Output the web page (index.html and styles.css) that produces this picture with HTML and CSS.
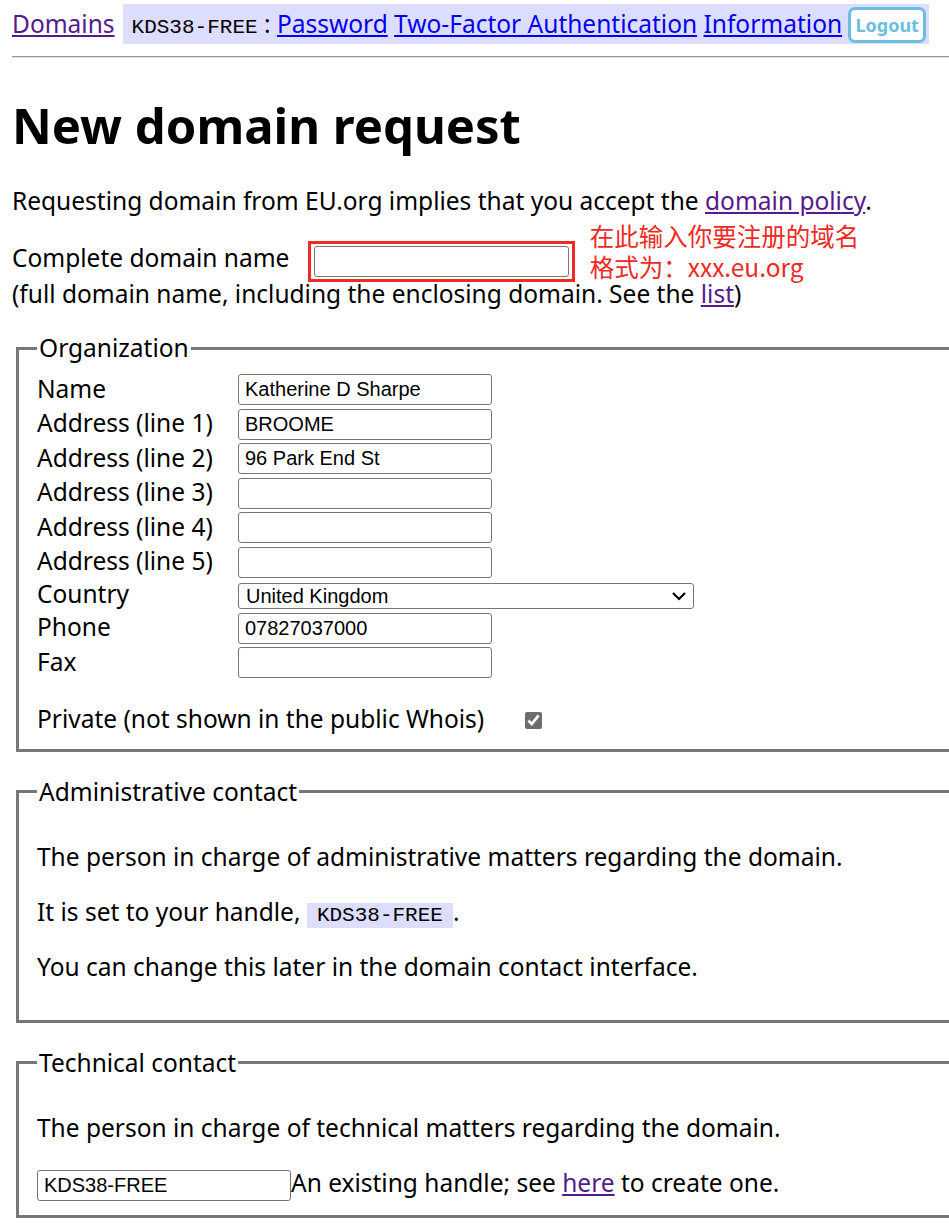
FILE: index.html
```html
<!DOCTYPE html>
<html lang="en">
<head>
  <meta charset="UTF-8">
  <meta name="viewport" content="width=device-width, initial-scale=1.0">
  <title>EU.org - New domain request</title>
  <link rel="stylesheet" href="styles.css">
</head>
<body>
  <nav class="topbar">
    <a class="seen" href="#">Domains</a>
    <div class="account">
      <span class="handle">KDS38-FREE</span> :
      <a href="#">Password</a>
      <a href="#">Two-Factor Authentication</a>
      <a href="#">Information</a>
      <button class="logout">Logout</button>
    </div>
  </nav>
  <hr>

  <h1>New domain request</h1>

  <p class="intro">Requesting domain from EU.org implies that you accept the <a class="seen" href="#">domain policy</a>.</p>

  <p class="fqdn">
    Complete domain name
    <span class="mark">
      <input type="text" name="fqdn">
      <span class="note">
        <span>在此输入你要注册的域名</span>
        <span>格式为：xxx.eu.org</span>
      </span>
    </span><br>
    (full domain name, including the enclosing domain. See the <a class="seen" href="#">list</a>)
  </p>

  <fieldset>
    <legend>Organization</legend>
    <table class="form">
      <tr><th>Name</th><td><input type="text" value="Katherine D Sharpe"></td></tr>
      <tr><th>Address (line 1)</th><td><input type="text" value="BROOME"></td></tr>
      <tr><th>Address (line 2)</th><td><input type="text" value="96 Park End St"></td></tr>
      <tr><th>Address (line 3)</th><td><input type="text"></td></tr>
      <tr><th>Address (line 4)</th><td><input type="text"></td></tr>
      <tr><th>Address (line 5)</th><td><input type="text"></td></tr>
      <tr class="short">
        <th>Country</th>
        <td>
          <select>
            <option>United Kingdom</option>
            <option>France</option>
            <option>Germany</option>
          </select>
        </td>
      </tr>
      <tr><th>Phone</th><td><input type="text" value="07827037000"></td></tr>
      <tr><th>Fax</th><td><input type="text"></td></tr>
    </table>
    <p class="private">Private (not shown in the public Whois) <input type="checkbox" checked></p>
  </fieldset>

  <fieldset>
    <legend>Administrative contact</legend>
    <p>The person in charge of administrative matters regarding the domain.</p>
    <p>It is set to your handle, <span class="tag">KDS38-FREE</span>.</p>
    <p>You can change this later in the domain contact interface.</p>
  </fieldset>

  <fieldset>
    <legend>Technical contact</legend>
    <p>The person in charge of technical matters regarding the domain.</p>
    <div class="handle-row"><input type="text" value="KDS38-FREE">An existing handle; see <a class="seen" href="#">here</a> to create one.</div>
  </fieldset>
</body>
</html>
```

FILE: styles.css
```css
html {
  overflow-x: hidden;
}

body {
  font-family: 'Noto Sans', 'Open Sans', sans-serif;
  font-size: 24.5px;
  line-height: 32px;
  margin: 4px 12px 12px;
  min-width: 1000px;
  color: #000;
  background: #fff;
}

a {
  color: #0000ee;
}

a.seen {
  color: #551a8b;
}

.topbar {
  display: flex;
  align-items: center;
}

.topbar > a {
  margin-right: 8px;
}

.account {
  background-color: #ddddff;
  height: 40px;
  line-height: 40px;
  padding: 0 3px 0 9px;
}

.handle {
  font-family: 'Liberation Mono', monospace;
  font-size: 21px;
}

.logout {
  vertical-align: middle;
  margin: -3px 0 0 0;
  height: 36px;
  padding: 0 4px;
  background: #fff;
  border: 3px solid #6cbee0;
  border-radius: 7px;
  color: #6cbee0;
  font-family: 'Noto Sans', sans-serif;
  font-weight: bold;
  font-size: 18px;
  cursor: pointer;
}

hr {
  border: 0;
  border-top: 1px solid #9a9a9a;
  border-bottom: 1px solid #e0e0e0;
  margin: 12px 0 0;
}

h1 {
  font-size: 49px;
  line-height: 64px;
  margin: 35px 0 28px;
}

p {
  margin: 23px 0;
}

.intro {
  margin: 0 0 23px;
}

.fqdn {
  margin: 0 0 20px;
  line-height: 36px;
}

.mark {
  position: relative;
  display: inline-block;
  vertical-align: middle;
  margin: -3px 0 -6px 12px;
  padding: 2px 3px;
  border: 3px solid #ee2a24;
  line-height: 0;
}

.note {
  position: absolute;
  left: 279px;
  top: -20px;
  display: flex;
  flex-direction: column;
  gap: 7px;
  font-family: 'Noto Sans CJK SC', sans-serif;
  font-size: 24.5px;
  line-height: 24px;
  color: #ee2a24;
  white-space: nowrap;
}

input[type="text"],
select {
  font-family: 'Liberation Sans', Arial, sans-serif;
  font-size: 20px;
  color: #000;
  border: 1px solid #767676;
  border-radius: 3px;
  box-sizing: border-box;
  margin: 0;
  vertical-align: middle;
}

input[type="text"] {
  width: 254px;
  height: 31px;
  padding: 1px 6px;
}

.mark input[type="text"] {
  width: 255px;
}

select {
  appearance: none;
  width: 456px;
  height: 26px;
  padding: 0 30px 0 7px;
  background: #fff url("data:image/svg+xml,%3Csvg xmlns='http://www.w3.org/2000/svg' width='16' height='10' viewBox='0 0 16 10'%3E%3Cpath d='M2 2l6 6 6-6' fill='none' stroke='%23000' stroke-width='2.2'/%3E%3C/svg%3E") no-repeat right 6px center;
}

fieldset {
  margin: 0 0 0 4px;
  padding: 7px 18px 14px;
  border: 3px solid #777;
}

fieldset + fieldset {
  margin-top: 24px;
}

legend {
  padding: 0 2px;
}

legend + p {
  margin-top: 26px;
}

.form {
  border-spacing: 0;
}

.form th {
  width: 201px;
  height: 34.5px;
  text-align: left;
  font-weight: normal;
  padding: 0;
}

.form .short th {
  height: 31.5px;
}

.form td {
  padding: 0;
  vertical-align: middle;
}

.form th,
.form td {
  line-height: 30px;
}

.private {
  margin: 24px 0 0;
}

.private input {
  width: 17px;
  height: 17px;
  margin: 0 0 0 34px;
  vertical-align: -1px;
  accent-color: #6d6d6d;
}

.tag {
  font-family: 'Liberation Mono', monospace;
  font-size: 21px;
  line-height: 20px;
  background-color: #ddddff;
  padding: 1px 10px;
}

.handle-row {
  margin-top: 22px;
  line-height: 32px;
}
```
